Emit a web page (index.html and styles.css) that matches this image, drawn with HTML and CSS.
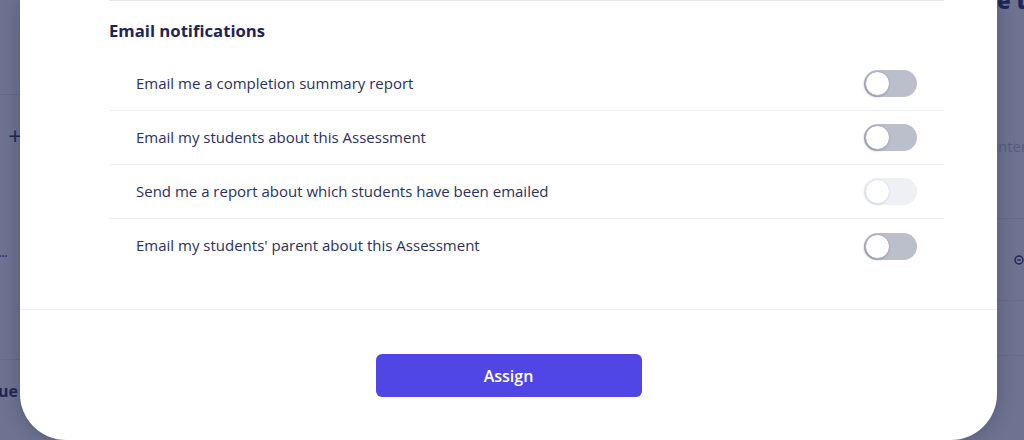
FILE: index.html
```html
<!DOCTYPE html>
<html lang="en">
<head>
<meta charset="utf-8">
<title>Assign assessment</title>
<link rel="stylesheet" href="styles.css">
</head>
<body>
<div class="stage">
  <div class="backdrop backdrop-left">
    <div class="bd-block bd-top"></div>
    <div class="bd-block bd-mid">
      <span class="bd-plus">+</span>
      <span class="bd-dots">...</span>
    </div>
    <div class="bd-block bd-bottom"><span class="bd-ue">ue</span></div>
  </div>

  <div class="modal">
    <section class="notif">
      <h2 class="notif-title">Email notifications</h2>
      <ul class="notif-list">
        <li class="notif-row">
          <span class="notif-label">Email me a completion summary report</span>
          <span class="toggle"><span class="knob"></span></span>
        </li>
        <li class="notif-row">
          <span class="notif-label">Email my students about this Assessment</span>
          <span class="toggle"><span class="knob"></span></span>
        </li>
        <li class="notif-row">
          <span class="notif-label">Send me a report about which students have been emailed</span>
          <span class="toggle toggle-disabled"><span class="knob"></span></span>
        </li>
        <li class="notif-row">
          <span class="notif-label">Email my students' parent about this Assessment</span>
          <span class="toggle"><span class="knob"></span></span>
        </li>
      </ul>
    </section>
    <footer class="modal-footer">
      <button class="btn-assign" type="button">Assign</button>
    </footer>
  </div>

  <div class="backdrop backdrop-right">
    <div class="bdr-head">e the</div>
    <div class="bdr-sub">ntent</div>
    <div class="bdr-row bdr-row1">
      <svg class="bdr-icon" width="12" height="12" viewBox="0 0 12 12"><circle cx="6" cy="6" r="4.8" fill="none" stroke="#1f2552" stroke-width="1.6"/><path d="M3.8 6h4.4" stroke="#1f2552" stroke-width="1.6"/></svg>
    </div>
    <div class="bdr-row bdr-row2"></div>
    <div class="bdr-row bdr-row3"></div>
  </div>
</div>
</body>
</html>
```

FILE: styles.css
```css
* { box-sizing: border-box; }
html, body { margin: 0; padding: 0; }
body {
  background: #6d7390;
  font-family: "Open Sans", "Noto Sans", "Liberation Sans", sans-serif;
  color: #262c5a;
}
.stage {
  display: grid;
  grid-template-columns: 20px 977px 27px;
  width: 1024px;
  height: 440px;
  overflow: hidden;
  background: #6d7390;
}

/* backdrop strips */
.backdrop {
  position: relative;
  overflow: hidden;
  color: #1f2552;
  white-space: nowrap;
}
.bd-block { border-bottom: 1px solid #646b88; }
.bd-top { height: 95px; }
.bd-mid {
  height: 265px;
  display: flex;
  flex-direction: column;
  align-items: flex-end;
}
.bd-plus {
  font-size: 24px;
  line-height: 24px;
  margin-top: 29px;
  margin-right: -2px;
  font-weight: 400;
}
.bd-dots {
  align-self: flex-start;
  font-size: 15px;
  line-height: 12px;
  margin-top: 97px;
  margin-left: -2px;
  letter-spacing: -1px;
  color: #2a3060;
}
.bd-bottom { border-bottom: none; display: flex; justify-content: flex-end; }
.bd-ue {
  font-weight: 700;
  font-size: 16px;
  line-height: 20px;
  margin-top: 21px;
  margin-right: 2px;
}

.backdrop-right { color: #1f2552; }
.bdr-head {
  font-weight: 800;
  font-size: 22px;
  line-height: 22px;
  margin-top: -11px;
}
.bdr-sub {
  font-size: 15px;
  line-height: 20px;
  margin-top: 125px;
  margin-left: 1px;
  color: #555c7e;
}
.bdr-row { border-top: 1px solid #646b88; }
.bdr-row1 { margin-top: 62px; height: 82px; display: flex; align-items: center; padding-left: 17px; }
.bdr-row2 { height: 55px; }
.bdr-row3 { height: 90px; }
.bdr-icon { display: block; }

/* modal */
.modal {
  background: #ffffff;
  height: 440px;
  border-radius: 0 0 46px 46px;
  box-shadow: 0 0 18px rgba(35, 40, 80, 0.35);
  display: flex;
  flex-direction: column;
  position: relative;
  z-index: 1;
}
.notif {
  margin: 0 53px 0 89px;
  border-top: 1px solid #e5e7eb;
  height: 309px;
}
.notif-title {
  margin: 0;
  padding-top: 19px;
  font-size: 16.7px;
  line-height: 22px;
  font-weight: 700;
  color: #1e2456;
}
.notif-list {
  list-style: none;
  margin: 15px 0 0 0;
  padding: 0;
}
.notif-row {
  height: 54px;
  display: flex;
  align-items: center;
  justify-content: space-between;
  padding: 0 27px 2px 27px;
  border-bottom: 1px solid #eceef2;
}
.notif-row:last-child { border-bottom: none; }
.notif-label {
  font-size: 15px;
  color: #2a3061;
}
.toggle {
  width: 53px;
  height: 27px;
  border-radius: 14px;
  background: #bbbfcc;
  display: flex;
  align-items: center;
  padding-left: 1px;
  margin-top: 2px;
}
.knob {
  width: 25px;
  height: 25px;
  border-radius: 50%;
  background: #ffffff;
  border: 1.5px solid #a6aabd;
  box-shadow: -1px 1px 2px rgba(60, 65, 100, 0.35);
}
.toggle-disabled { background: #eef0f5; }
.toggle-disabled .knob { border-color: #dfe2ea; box-shadow: -1px 1px 2px rgba(60, 65, 100, 0.12); }

.modal-footer {
  border-top: 1px solid #eef0f3;
  display: flex;
  justify-content: center;
  padding-top: 44px;
}
.btn-assign {
  width: 266px;
  height: 43px;
  border: none;
  border-radius: 6px;
  background: #4f46e5;
  color: #ffffff;
  font-family: "Open Sans", "Noto Sans", "Liberation Sans", sans-serif;
  font-size: 16px;
  font-weight: 600;
}
```
